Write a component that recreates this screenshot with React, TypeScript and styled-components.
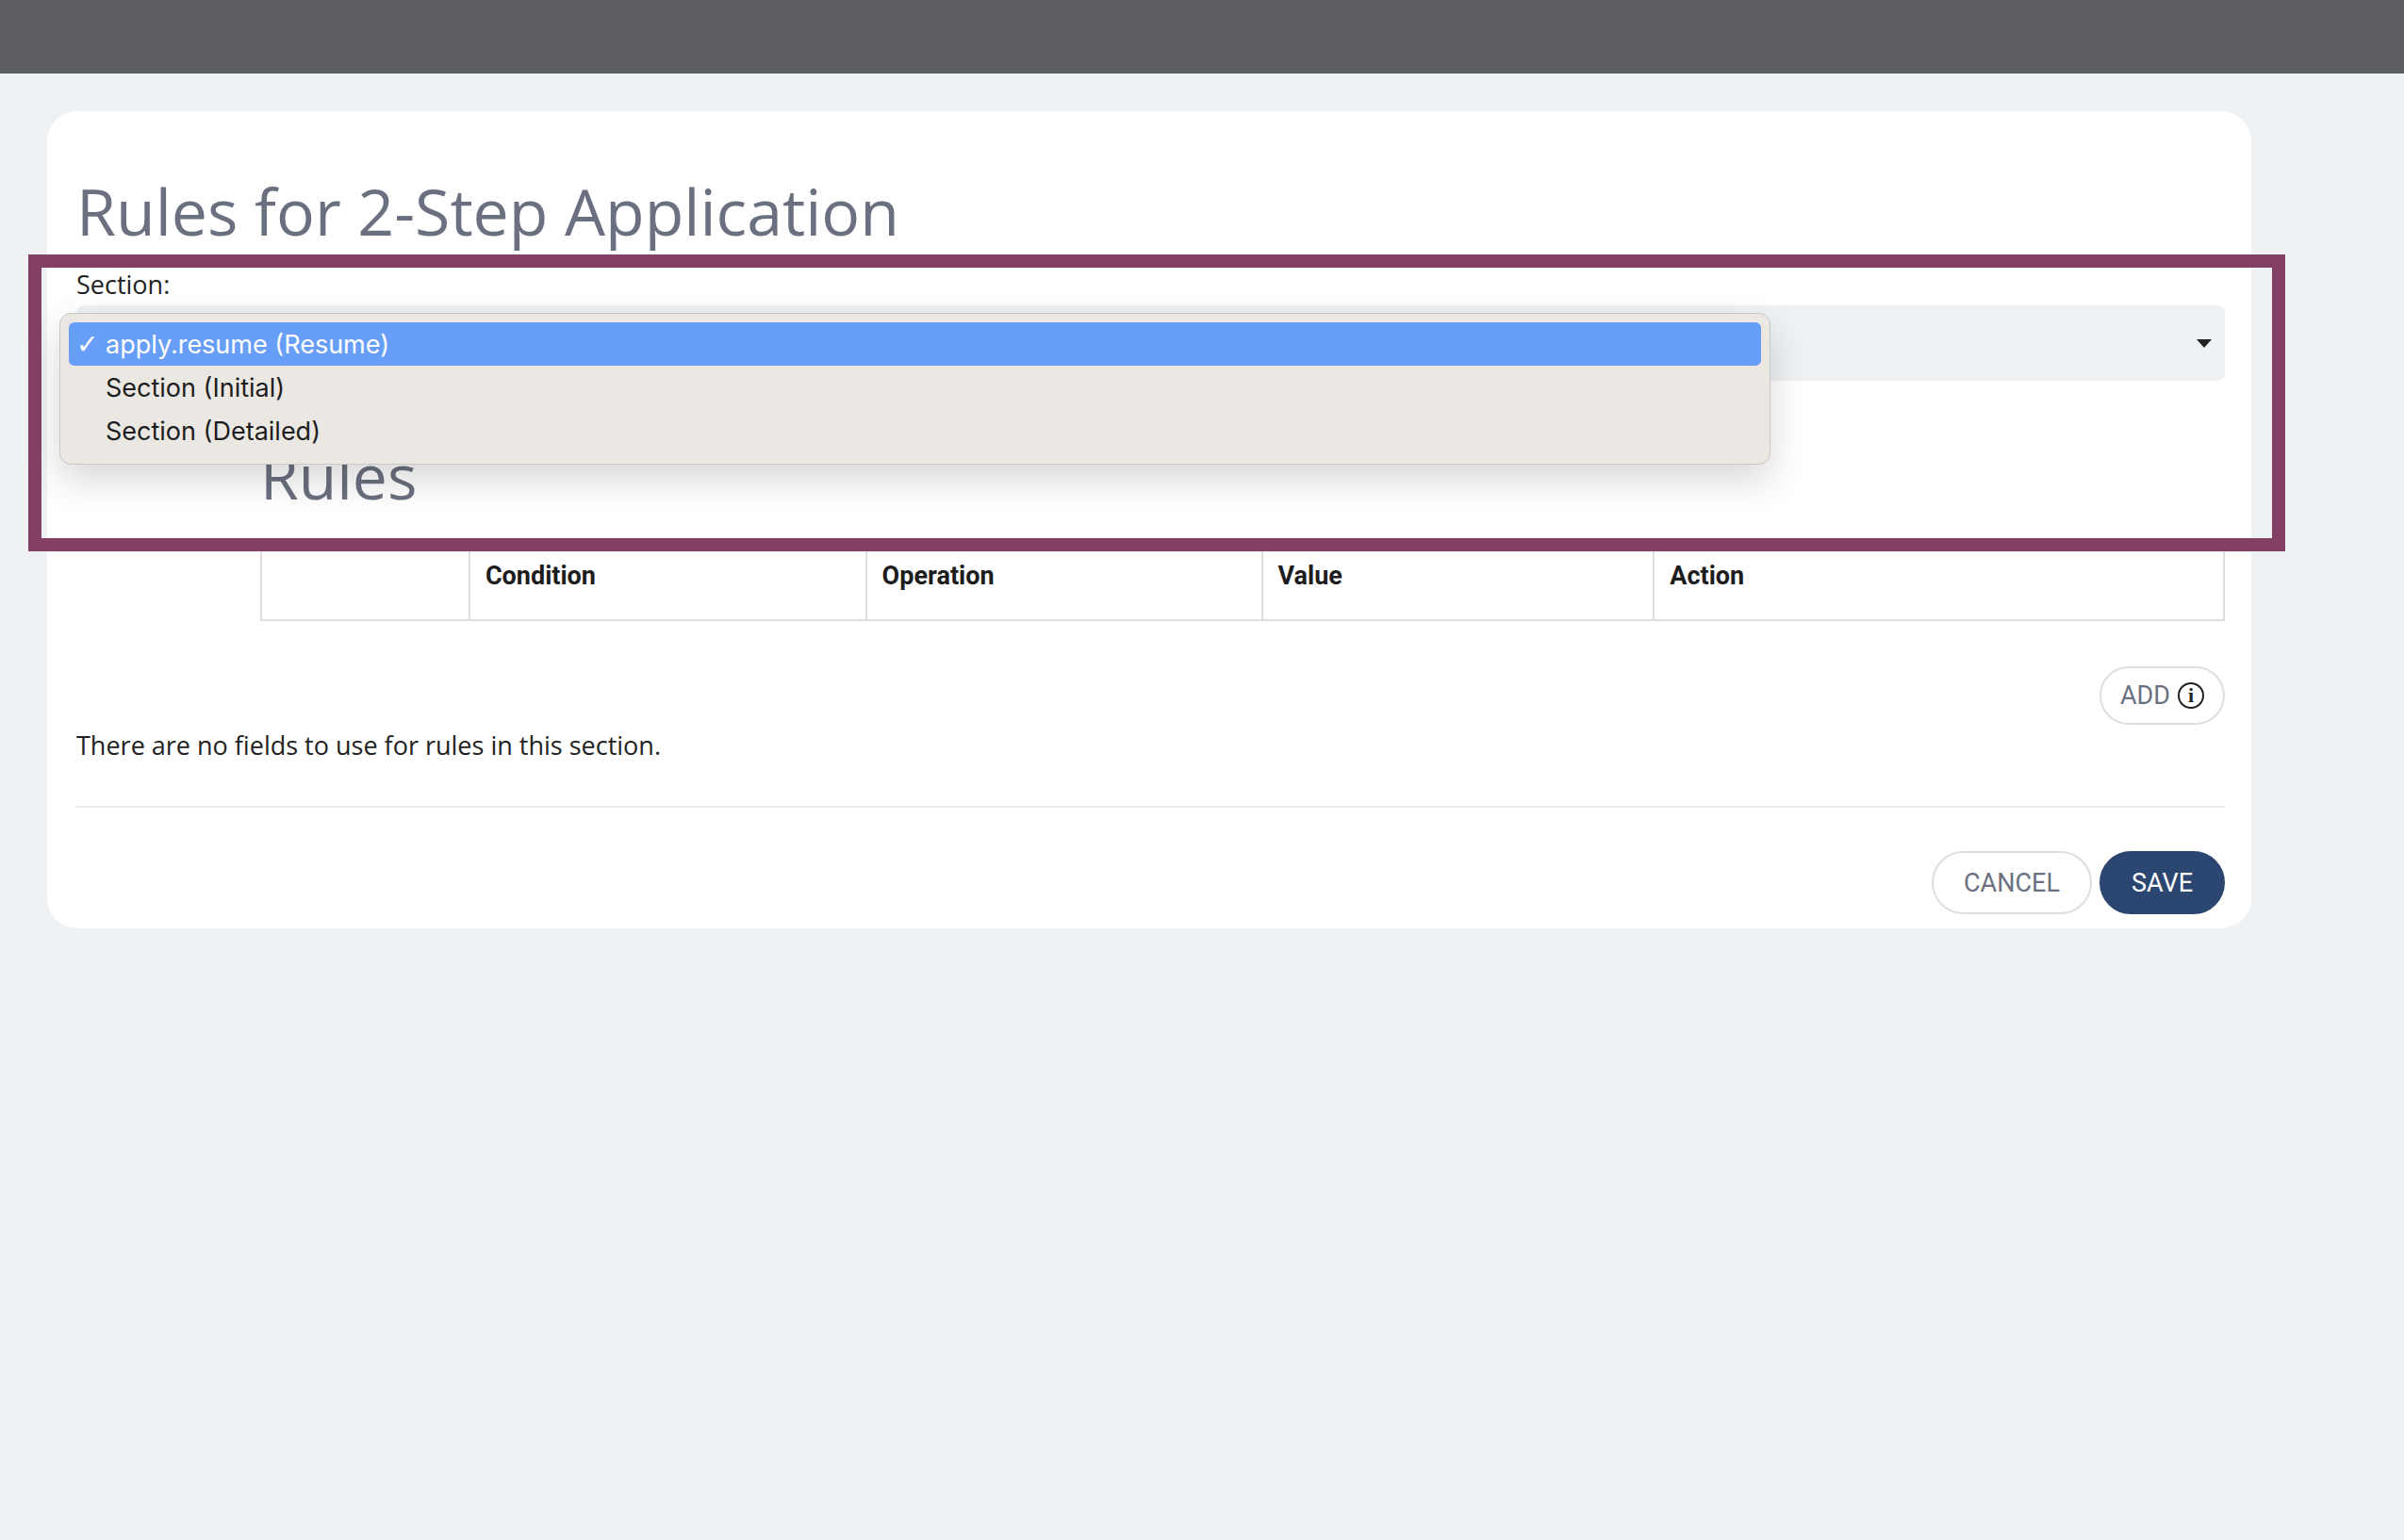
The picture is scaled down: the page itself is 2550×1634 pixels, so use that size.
import styled, { createGlobalStyle } from 'styled-components';

const Global = createGlobalStyle`
  body { margin: 0; background: #eef2f5; font-family: "Open Sans", sans-serif; }
`;

const TopBar = styled.div`
  height: 78px;
  background: #5c5d60;
`;

const Page = styled.div`
  padding: 40px 0 0 50px;
  width: 2338px;
`;

const Card = styled.div`
  position: relative;
  background: #fff;
  border-radius: 32px;
  padding: 58px 28px 20px 31px;
  height: 867px;
  box-sizing: border-box;
`;

const Title = styled.h1`
  margin: 0;
  font-weight: 400;
  font-size: 68px;
  line-height: 96px;
  color: #6b7080;
`;

const Label = styled.div`
  margin-top: 10px;
  font-size: 27px;
  color: #222;
  line-height: 40px;
`;

const SelectBox = styled.div`
  position: relative;
  height: 80px;
  margin-top: 2px;
  background: #eef2f5;
  border-radius: 8px;
  display: flex;
  align-items: center;
  justify-content: flex-end;
  padding-right: 14px;
`;

const Caret = styled.div`
  width: 0;
  height: 0;
  border-left: 8px solid transparent;
  border-right: 8px solid transparent;
  border-top: 9px solid #222;
`;

const Menu = styled.div`
  position: absolute;
  left: -18px;
  top: 8px;
  width: 1815px;
  box-sizing: border-box;
  padding: 9px 9px 12px;
  background: #ebe8e4;
  border: 1px solid #c9c6c3;
  border-radius: 12px;
  box-shadow: 0 16px 40px rgba(0, 0, 0, 0.16);
  font-family: "Inter", "Liberation Sans", sans-serif;
  z-index: 2;
`;

const Option = styled.div<{ $selected?: boolean }>`
  height: 46px;
  display: flex;
  align-items: center;
  padding-left: 39px;
  position: relative;
  font-size: 27px;
  border-radius: 6px;
  color: ${p => (p.$selected ? '#fff' : '#1d1d1d')};
  background: ${p => (p.$selected ? '#679ef8' : 'transparent')};
`;

const Check = styled.span`
  position: absolute;
  left: 8px;
  font-family: "DejaVu Sans", sans-serif;
  font-size: 28px;
`;

const Rules = styled.div`
  padding-left: 195px;
  margin-top: 60px;
`;

const RulesTitle = styled.h2`
  margin: 0;
  font-weight: 400;
  font-size: 66px;
  line-height: 80px;
  color: #6b7080;
`;

const Table = styled.table`
  margin-top: 27px;
  width: 100%;
  border-collapse: collapse;
  font-family: Roboto, sans-serif;
`;

const Th = styled.th<{ $w: number }>`
  width: ${p => p.$w}px;
  border: 2px solid #dedede;
  text-align: left;
  vertical-align: top;
  padding: 22px 16px 30px;
  line-height: 32px;
  font-size: 27px;
  font-weight: 700;
  color: #1d1d1d;
`;

const AddRow = styled.div`
  display: flex;
  justify-content: flex-end;
  margin-top: 48px;
`;

const PillButton = styled.button<{ $primary?: boolean; $h?: number }>`
  height: ${p => p.$h ?? 67}px;
  padding: 0 ${p => (p.$h ? 20 : 32)}px;
  border-radius: 34px;
  border: 2px solid ${p => (p.$primary ? '#2c4672' : '#dedede')};
  background: ${p => (p.$primary ? '#2c4672' : '#fff')};
  color: ${p => (p.$primary ? '#fff' : '#6b7080')};
  font-family: Roboto, sans-serif;
  font-size: 27px;
  display: inline-flex;
  align-items: center;
  gap: 8px;
`;

const InfoIcon = styled.span`
  width: 28px;
  height: 28px;
  border: 2px solid #222;
  border-radius: 50%;
  box-sizing: border-box;
  display: inline-flex;
  align-items: center;
  justify-content: center;
  font-family: "Liberation Serif", serif;
  font-weight: 700;
  font-size: 22px;
  color: #222;
`;

const Empty = styled.p`
  margin: 0;
  margin-top: 3px;
  font-size: 27px;
  color: #222;
`;

const Divider = styled.hr`
  border: 0;
  border-top: 2px solid #ebebeb;
  margin: 46px 0 46px;
`;

const Footer = styled.div`
  display: flex;
  justify-content: flex-end;
  gap: 8px;
`;

const Highlight = styled.div`
  position: absolute;
  left: -20px;
  top: 152px;
  width: 2394px;
  height: 315px;
  box-sizing: border-box;
  border: 14px solid #834064;
  pointer-events: none;
  z-index: 3;
`;

export default function App() {
  return (
    <>
      <Global />
      <TopBar />
      <Page>
        <Card>
          <Title>Rules for 2-Step Application</Title>
          <Label>Section:</Label>
          <SelectBox>
            <Caret />
            <Menu>
              <Option $selected><Check>✓</Check>apply.resume (Resume)</Option>
              <Option>Section (Initial)</Option>
              <Option>Section (Detailed)</Option>
            </Menu>
          </SelectBox>
          <Rules>
            <RulesTitle>Rules</RulesTitle>
            <Table>
              <thead>
                <tr>
                  <Th $w={208}></Th>
                  <Th $w={417}>Condition</Th>
                  <Th $w={416}>Operation</Th>
                  <Th $w={417}>Value</Th>
                  <Th $w={626}>Action</Th>
                </tr>
              </thead>
            </Table>
            <AddRow>
              <PillButton $h={62}>ADD <InfoIcon>i</InfoIcon></PillButton>
            </AddRow>
          </Rules>
          <Empty>There are no fields to use for rules in this section.</Empty>
          <Divider />
          <Footer>
            <PillButton>CANCEL</PillButton>
            <PillButton $primary>SAVE</PillButton>
          </Footer>
          <Highlight />
        </Card>
      </Page>
    </>
  );
}
